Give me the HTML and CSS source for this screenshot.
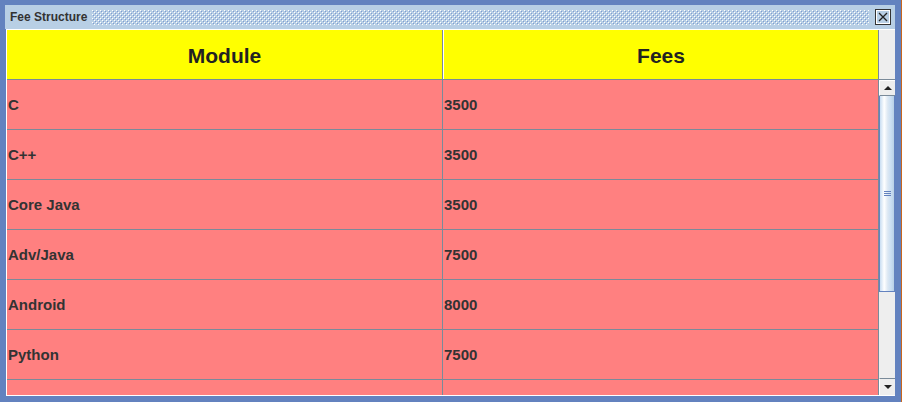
FILE: index.html
```html
<!DOCTYPE html>
<html>
<head>
<meta charset="utf-8">
<link rel="stylesheet" href="styles.css">
</head>
<body>
<div class="frame">
  <div class="titlebar">
    <span class="title">Fee Structure</span>
    <span class="bumps"></span>
    <span class="close">
      <svg width="16" height="16" viewBox="0 0 16 16">
        <rect x="0.5" y="0.5" width="15" height="15" fill="#B8CFE5" stroke="#333"/>
        <rect x="1.5" y="1.5" width="13" height="13" fill="none" stroke="#fff"/>
        <path d="M4 4 L12 12 M12 4 L4 12" stroke="#222" stroke-width="1.3"/>
      </svg>
    </span>
  </div>
  <div class="content">
    <div class="table">
      <div class="row head">
        <div class="cell c1">Module</div>
        <div class="cell c2">Fees</div>
      </div>
      <div class="row"><div class="cell c1">C</div><div class="cell c2">3500</div></div>
      <div class="row"><div class="cell c1">C++</div><div class="cell c2">3500</div></div>
      <div class="row"><div class="cell c1">Core Java</div><div class="cell c2">3500</div></div>
      <div class="row"><div class="cell c1">Adv/Java</div><div class="cell c2">7500</div></div>
      <div class="row"><div class="cell c1">Android</div><div class="cell c2">8000</div></div>
      <div class="row"><div class="cell c1">Python</div><div class="cell c2">7500</div></div>
      <div class="row"><div class="cell c1"></div><div class="cell c2"></div></div>
    </div>
    <div class="side">
      <div class="corner"></div>
      <div class="vbar">
        <div class="btn up"><span class="tri-up"></span></div>
        <div class="thumb"><span class="grip"></span><span class="grip"></span><span class="grip"></span></div>
        <div class="track"></div>
        <div class="btn down"><span class="tri-down"></span></div>
      </div>
    </div>
  </div>
</div>
</body>
</html>
```
FILE: styles.css
```css
* { box-sizing: border-box; }
html, body { margin: 0; padding: 0; }
body { width: 902px; height: 402px; overflow: hidden; font-family: "Liberation Sans", Arial, sans-serif; }

.frame {
  width: 902px;
  height: 402px;
  background: #6382BF;
  padding: 5px 6px 6px 5px;
  border-right: 1px solid #C8661E;
  display: flex;
  flex-direction: column;
}

.titlebar {
  height: 24px;
  flex: none;
  background: #B8CFE5;
  display: flex;
  align-items: center;
  padding: 0 4px 0 5px;
}
.title {
  font-weight: bold;
  font-size: 12px;
  color: #333;
  line-height: 14px;
}
.bumps {
  flex: 1;
  height: 15px;
  margin: 0 6px 0 5px;
  background:
    conic-gradient(at 1px 1px, transparent 75%, #fff 0) 0 0 / 4px 4px,
    conic-gradient(at 1px 1px, transparent 75%, #fff 0) 2px 2px / 4px 4px,
    conic-gradient(at 1px 1px, transparent 75%, #7F9BD2 0) 1px 1px / 4px 4px,
    conic-gradient(at 1px 1px, transparent 75%, #7F9BD2 0) 3px 3px / 4px 4px,
    #B8CFE5;
}
.close { width: 16px; height: 16px; display: block; }
.close svg { display: block; }

.content {
  flex: 1;
  margin-left: 1px;
  border-top: 1px solid #fff;
  border-left: 1px solid #fff;
  border-bottom: 1px solid #fff;
  display: flex;
  overflow: hidden;
  min-height: 0;
}

.table {
  width: 871px;
  flex: none;
  overflow: hidden;
  background: #FF8080;
}
.row {
  display: flex;
  height: 50px;
  border-bottom: 1px solid #7A8A99;
}
.cell {
  display: flex;
  align-items: center;
  font-weight: bold;
  font-size: 15px;
  color: #333;
  padding-left: 1px;
}
.c1 { width: 436px; border-right: 1px solid #7A8A99; }
.c2 { flex: 1; }

.head { background: #FFFF00; }
.head .cell {
  justify-content: center;
  font-size: 21px;
  padding-left: 0;
  padding-top: 2px;
  color: #222;
}
.head .c2 { border-left: 1px solid #fff; }

.side {
  width: 17px;
  flex: none;
  display: flex;
  flex-direction: column;
  border-left: 1px solid #7A8A99;
}
.corner {
  height: 50px;
  flex: none;
  background: #EEEEEE;
  border-bottom: 1px solid #7A8A99;
}
.vbar {
  flex: 1;
  display: flex;
  flex-direction: column;
  background: #EEEEEE;
}
.btn {
  height: 16px;
  flex: none;
  background: #EEEEEE;
  border-top: 1px solid #fff;
  border-left: 1px solid #fff;
  border-bottom: 1px solid #7A8A99;
  display: flex;
  align-items: center;
  justify-content: center;
}
.btn.down { border-bottom: none; border-top: 1px solid #7A8A99; height: 17px; }
.tri-up, .tri-down { width: 0; height: 0; border-left: 4px solid transparent; border-right: 4px solid transparent; }
.tri-up { border-bottom: 4px solid #222; }
.tri-down { border-top: 4px solid #222; }

.thumb {
  height: 196px;
  flex: none;
  border: 1px solid #6382BF;
  border-top: none;
  background: linear-gradient(to right, #C8DDF2 0%, #ffffff 30%, #DDE8F3 55%, #C8DDF2 80%, #B8CFE5 100%);
  display: flex;
  flex-direction: column;
  align-items: center;
  justify-content: center;
  gap: 1px;
}
.grip { width: 7px; height: 1px; background: #6382BF; }
.track { flex: 1; }
```
